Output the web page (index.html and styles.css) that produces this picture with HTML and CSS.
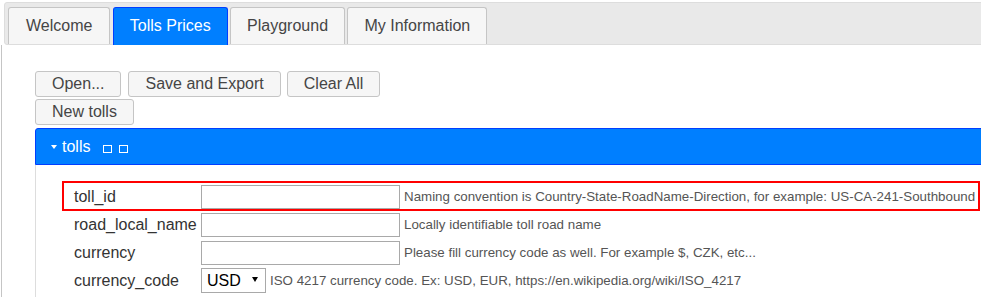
FILE: index.html
```html
<!DOCTYPE html>
<html lang="en">
<head>
    <meta charset="UTF-8">
    <meta name="viewport" content="width=device-width, initial-scale=1.0">
    <title>Tolls Prices</title>
    <link rel="stylesheet" href="styles.css">
</head>
<body>
    <div class="tabs">
        <ul class="tab-nav">
            <li class="tab">Welcome</li>
            <li class="tab active">Tolls Prices</li>
            <li class="tab">Playground</li>
            <li class="tab">My Information</li>
        </ul>

        <div class="tab-panel">
            <div class="toolbar">
                <button>Open...</button>
                <button>Save and Export</button>
                <button>Clear All</button>
            </div>
            <div class="toolbar">
                <button>New tolls</button>
            </div>

            <div class="section">
                <h3 class="section-head">
                    <span class="caret"></span>tolls
                    <span class="box"></span><span class="box"></span>
                </h3>
                <div class="section-body">
                    <div class="field highlighted">
                        <label class="field-label" for="toll_id">toll_id</label>
                        <input type="text" id="toll_id">
                        <span class="field-hint">Naming convention is Country-State-RoadName-Direction, for example: US-CA-241-Southbound</span>
                    </div>
                    <div class="field">
                        <label class="field-label" for="road_local_name">road_local_name</label>
                        <input type="text" id="road_local_name">
                        <span class="field-hint">Locally identifiable toll road name</span>
                    </div>
                    <div class="field">
                        <label class="field-label" for="currency">currency</label>
                        <input type="text" id="currency">
                        <span class="field-hint">Please fill currency code as well. For example $, CZK, etc...</span>
                    </div>
                    <div class="field">
                        <label class="field-label" for="currency_code">currency_code</label>
                        <span class="select">
                            <select id="currency_code">
                                <option>USD</option>
                                <option>EUR</option>
                                <option>CZK</option>
                            </select>
                        </span>
                        <span class="field-hint">ISO 4217 currency code. Ex: USD, EUR, https://en.wikipedia.org/wiki/ISO_4217</span>
                    </div>
                </div>
            </div>
        </div>
    </div>
</body>
</html>
```

FILE: styles.css
```css
html, body {
    margin: 0;
    overflow: hidden;
}
body {
    font-family: "Liberation Sans", Arial, Helvetica, sans-serif;
    font-size: 16px;
    color: #333;
    background-color: #fff;
}

/* tabs widget */
.tabs {
    width: 1010px;
    padding: 2px 0 0 4px;
}
.tab-nav {
    list-style: none;
    margin: 0;
    padding: 4px 3px 0;
    height: 43px;
    box-sizing: border-box;
    display: flex;
    align-items: flex-start;
    background-color: #e9e9e9;
    border: 1px solid #dddddd;
    border-radius: 3px;
}
.tab {
    padding: 8px 16px;
    line-height: 20px;
    border: 1px solid #c5c5c5;
    border-bottom: 0;
    border-radius: 3px 3px 0 0;
    background-color: #f6f6f6;
    color: #454545;
    margin-right: 2.4px;
}
.tab:first-child {
    padding: 8px 17px;
}
.tab.active {
    background-color: #007fff;
    border-color: #003eff;
    color: #fff;
    padding-bottom: 9px;
}
.tab-panel {
    margin-left: -3px;
    border-left: 1px solid #c5c5c5;
    padding: 26px 0 0 33px;
    height: calc(100vh - 45px);
    box-sizing: border-box;
}

/* buttons */
.toolbar {
    display: flex;
    gap: 7px;
    margin-bottom: 2px;
}
button {
    font-family: inherit;
    font-size: 16px;
    line-height: 18px;
    height: 26px;
    padding: 3px 16px;
    border: 1px solid #c5c5c5;
    border-radius: 3px;
    background-color: #f6f6f6;
    color: #454545;
    cursor: pointer;
}
button + button + button {
    margin-left: -1px;
}

/* accordion section */
.section-head {
    margin: 3px 0 0;
    height: 37px;
    box-sizing: border-box;
    display: flex;
    align-items: center;
    padding-left: 15px;
    background-color: #007fff;
    border: 1px solid #003eff;
    border-radius: 3px 3px 0 0;
    color: #fff;
    font-size: 16px;
    font-weight: normal;
}
.caret {
    width: 0;
    height: 0;
    border-left: 3.5px solid transparent;
    border-right: 3.5px solid transparent;
    border-top: 4px solid #fff;
    margin: 1px 5px 0 0;
}
.box {
    width: 9px;
    height: 8px;
    box-sizing: border-box;
    border: 1px solid #fff;
    margin: 4px 0 0 13px;
}
.box + .box {
    margin-left: 7px;
}
.section-body {
    border-left: 1px solid #dddddd;
    padding: 17px 0 0 27px;
    height: 132px;
    box-sizing: border-box;
}

/* form rows */
.field {
    display: flex;
    align-items: flex-start;
    width: 916px;
    height: 28px;
    box-sizing: border-box;
    padding: 3px 0 0 11px;
}
.field.highlighted {
    outline: 2px solid #ff0000;
    outline-offset: -1px;
}
.field-label {
    width: 127px;
    flex-shrink: 0;
    line-height: 24px;
    color: #333;
}
input {
    width: 199px;
    height: 24px;
    box-sizing: border-box;
    margin: 0;
    padding: 1px 3px;
    border: 1px solid #a9a9a9;
    font-family: inherit;
    font-size: 14px;
}
.field-hint {
    margin-left: 4px;
    font-size: 13.33px;
    line-height: 24px;
    color: #555;
    white-space: nowrap;
}
.select {
    position: relative;
    display: inline-block;
    margin-top: -1px;
}
select {
    appearance: none;
    -webkit-appearance: none;
    width: 65px;
    height: 25px;
    margin: 0;
    padding: 0 0 0 5px;
    border: 1px solid #a9a9a9;
    border-radius: 0;
    background-color: #fff;
    color: #000;
    font-family: inherit;
    font-size: 16px;
}
.select::after {
    content: "";
    position: absolute;
    right: 8px;
    top: 9px;
    border-left: 3px solid transparent;
    border-right: 3px solid transparent;
    border-top: 5px solid #000;
    pointer-events: none;
}
.select + .field-hint {
    margin-left: 4px;
}
```
